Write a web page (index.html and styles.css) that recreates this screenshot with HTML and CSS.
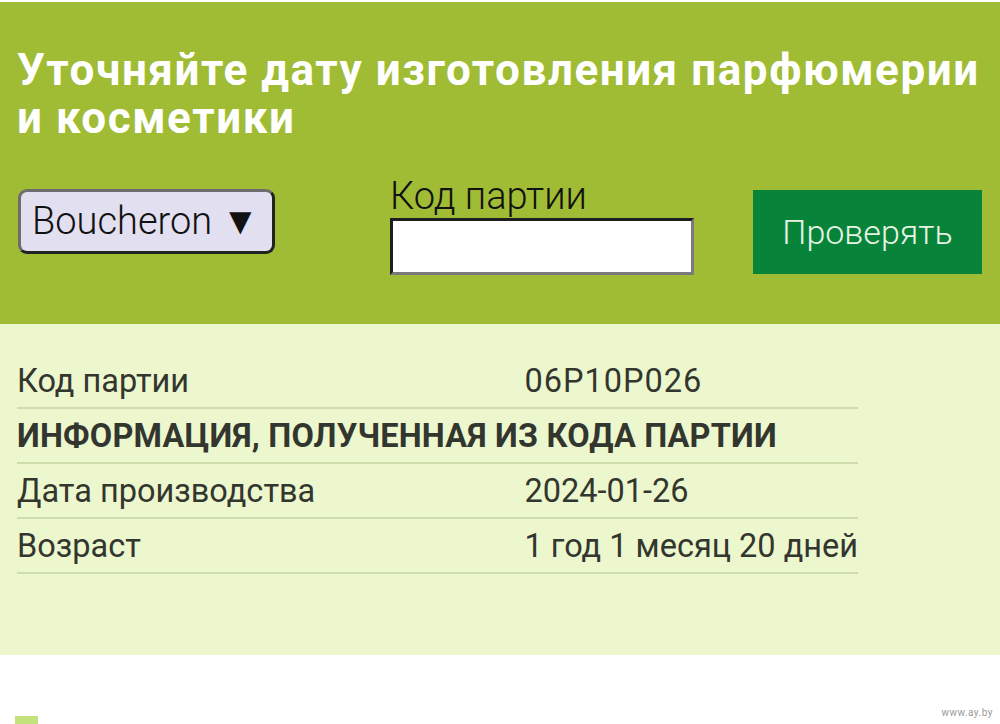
FILE: index.html
```html
<!DOCTYPE html>
<html lang="ru">
<head>
    <meta charset="UTF-8">
    <meta name="viewport" content="width=device-width, initial-scale=1.0">
    <title>Проверка кода партии</title>
    <link rel="stylesheet" href="styles.css">
</head>
<body>
    <div class="hero">
        <h1>Уточняйте дату изготовления парфюмерии и косметики</h1>
        <form class="check-form">
            <div class="brand-select">Boucheron ▼</div>
            <div class="code-group">
                <label for="code">Код партии</label>
                <input type="text" id="code" name="code">
            </div>
            <button type="button">Проверять</button>
        </form>
    </div>
    <div class="result">
        <table class="result-table">
            <tr>
                <td class="col-name">Код партии</td>
                <td class="code-value">06P10P026</td>
            </tr>
            <tr>
                <td colspan="2" class="section-title">ИНФОРМАЦИЯ, ПОЛУЧЕННАЯ ИЗ КОДА ПАРТИИ</td>
            </tr>
            <tr>
                <td class="col-name">Дата производства</td>
                <td>2024-01-26</td>
            </tr>
            <tr>
                <td class="col-name">Возраст</td>
                <td>1 год 1 месяц 20 дней</td>
            </tr>
        </table>
    </div>
    <div class="footer">
        <span class="footer-mark"></span>
        <span class="watermark">www.ay.by</span>
    </div>
</body>
</html>
```

FILE: styles.css
```css
body {
    margin: 0;
    font-family: Roboto, 'Noto Sans', Arial, sans-serif;
    background: #fff;
}
.hero {
    margin-top: 2px;
    background: #a0bc34;
    padding: 44px 17px 49px 17px;
}
h1 {
    margin: 0;
    color: #fff;
    font-size: 44px;
    line-height: 48px;
    font-weight: bold;
    letter-spacing: 1.55px;
}
.check-form {
    display: flex;
    align-items: flex-start;
    margin-top: 33px;
}
.brand-select {
    box-sizing: border-box;
    width: 257px;
    height: 65px;
    margin-top: 14px;
    margin-left: 1px;
    background: #e1dff0;
    border: 3px solid;
    border-color: #6e6e6e #222 #222 #6e6e6e;
    border-radius: 9px;
    font-size: 38px;
    font-weight: 300;
    line-height: 58px;
    padding-left: 11px;
    color: #111;
    white-space: nowrap;
}
.code-group {
    margin-left: 115px;
    display: flex;
    flex-direction: column;
}
label {
    font-size: 38px;
    font-weight: 300;
    line-height: 42px;
    color: #111;
}
input {
    box-sizing: border-box;
    width: 304px;
    height: 57px;
    margin: 1px 0 0 0;
    background: #fff;
    border: 3px solid;
    border-color: #1e1e1e #7a7a7a #7a7a7a #1e1e1e;
    outline: none;
}
button {
    margin-left: 59px;
    margin-top: 15px;
    width: 229px;
    height: 84px;
    background: #08843a;
    color: #e8f3e4;
    border: none;
    font-family: inherit;
    font-size: 34px;
    font-weight: 300;
    cursor: pointer;
}
.result {
    background: #edf7cd;
    padding: 30px 17px 81px 17px;
}
.result-table {
    width: 841px;
    border-collapse: collapse;
    color: #33362f;
    font-size: 32.5px;
}
.result-table td {
    padding: 8px 0 7px 0;
    line-height: 38px;
    border-bottom: 2px solid #cfdcab;
    white-space: nowrap;
}
.col-name {
    width: 509px;
}
.code-value {
    letter-spacing: 1px;
}
.section-title {
    font-weight: bold;
    letter-spacing: 0.2px;
}
.footer {
    height: 69px;
    display: flex;
    align-items: flex-end;
    justify-content: space-between;
    padding: 0 7px 0 15px;
}
.footer-mark {
    width: 23px;
    height: 8px;
    background: #c4e27b;
}
.watermark {
    font-size: 10px;
    color: #9a9a9a;
    margin-bottom: 6px;
    letter-spacing: 0.5px;
}
```
